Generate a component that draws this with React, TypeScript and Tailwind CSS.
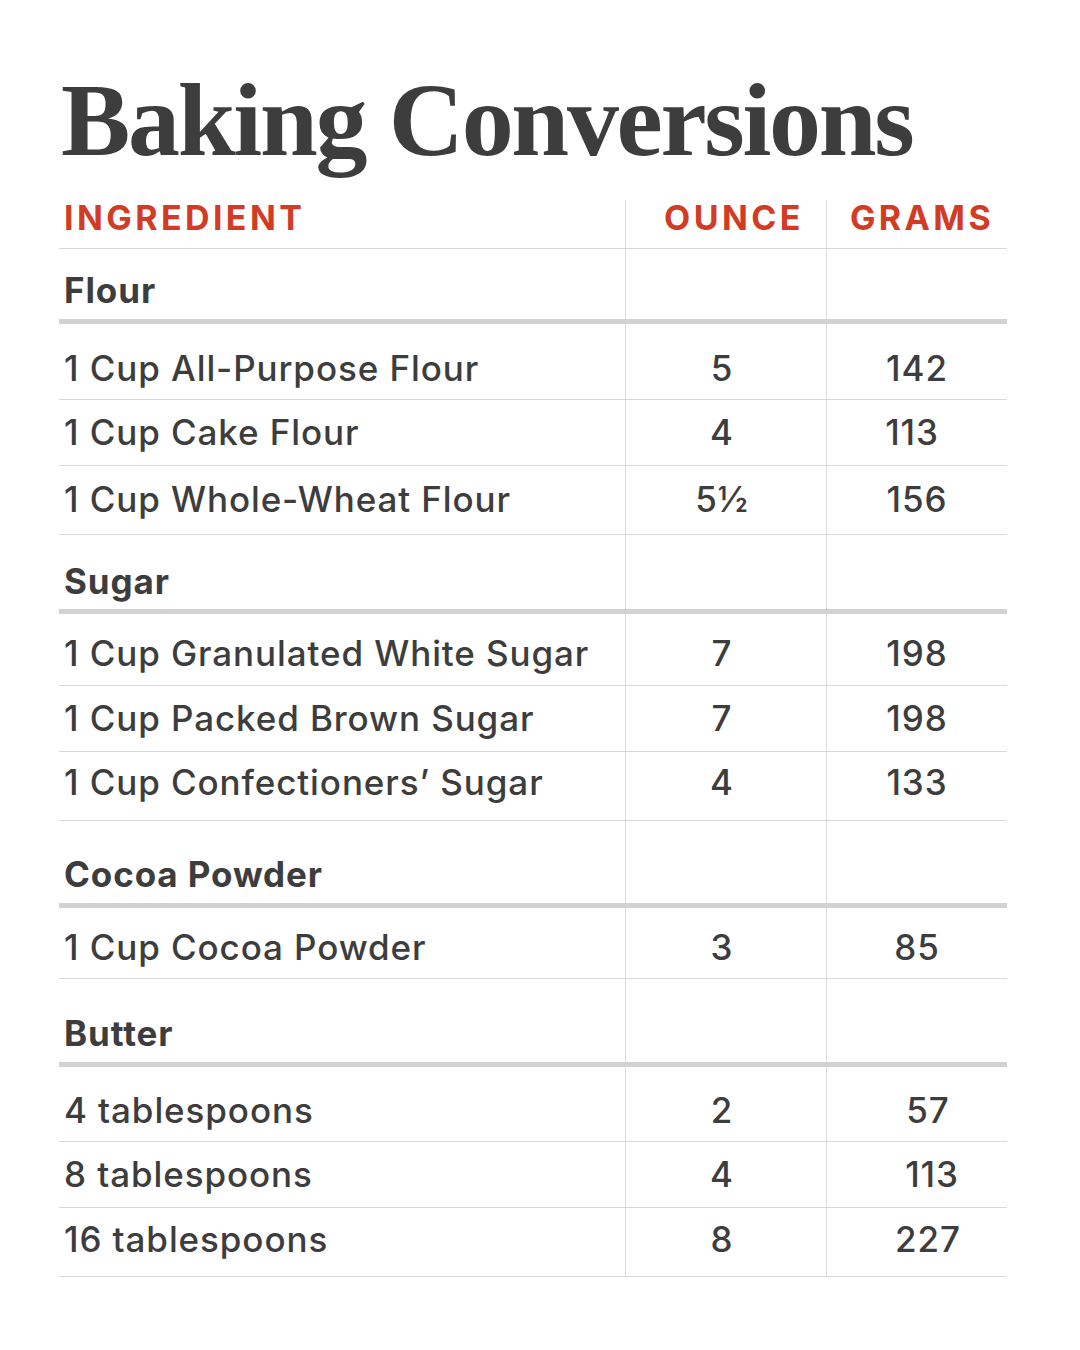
import React from "react";

type Row = {
  kind: "section" | "item";
  name: string;
  oz?: string;
  g?: string;
  h: string; // row height incl. border
  pad: string; // vertical nudge for text
  gPad?: string;
};

const rows: Row[] = [
  { kind: "section", name: "Flour", h: "h-[75px]", pad: "pt-[13px]" },
  { kind: "item", name: "1 Cup All-Purpose Flour", oz: "5", g: "142", h: "h-[76px]", pad: "pt-[13px]" },
  { kind: "item", name: "1 Cup Cake Flour", oz: "4", g: "113", h: "h-[66px]", pad: "pt-0", gPad: "pr-[10px]" },
  { kind: "item", name: "1 Cup Whole-Wheat Flour", oz: "5½", g: "156", h: "h-[69px]", pad: "pb-[2px]" },
  { kind: "section", name: "Sugar", h: "h-[79px]", pad: "pt-[18px]" },
  { kind: "item", name: "1 Cup Granulated White Sugar", oz: "7", g: "198", h: "h-[72px]", pad: "pt-[7px]" },
  { kind: "item", name: "1 Cup Packed Brown Sugar", oz: "7", g: "198", h: "h-[66px]", pad: "pt-0" },
  { kind: "item", name: "1 Cup Confectioners’ Sugar", oz: "4", g: "133", h: "h-[69px]", pad: "pb-[8px]" },
  { kind: "section", name: "Cocoa Powder", h: "h-[87px]", pad: "pt-[24px]" },
  { kind: "item", name: "1 Cup Cocoa Powder", oz: "3", g: "85", h: "h-[71px]", pad: "pt-[8px]" },
  { kind: "section", name: "Butter", h: "h-[88px]", pad: "pt-[26px]" },
  { kind: "item", name: "4 tablespoons", oz: "2", g: "57", h: "h-[75px]", pad: "pt-[12px]", gPad: "pl-[22px]" },
  { kind: "item", name: "8 tablespoons", oz: "4", g: "113", h: "h-[66px]", pad: "pt-0", gPad: "pl-[30px]" },
  { kind: "item", name: "16 tablespoons", oz: "8", g: "227", h: "h-[69px]", pad: "pb-[6px]", gPad: "pl-[22px]" },
];

const sans = "font-['Inter','Liberation_Sans',sans-serif]";

function TableRow({ row }: { row: Row }) {
  const isSection = row.kind === "section";
  const border = isSection ? "border-b-[5px] border-[#d2d2d2]" : "border-b border-[#d8d8d8]";
  return (
    <div className={`grid grid-cols-[566px_201px_181px] ${row.h} ${border}`}>
      <div className={`flex items-center pl-[5px] ${row.pad}`}>
        <span className={isSection ? "font-bold" : "font-medium"}>{row.name}</span>
      </div>
      <div className={`flex items-center justify-center border-l border-[#dcdcdc] pr-[8px] ${row.pad}`}>
        {row.oz}
      </div>
      <div className={`flex items-center justify-center border-l border-[#dcdcdc] ${row.gPad ?? ""} ${row.pad}`}>
        {row.g}
      </div>
    </div>
  );
}

export default function App() {
  return (
    <div className="w-[1080px] h-[1350px] bg-white text-[#3d3d3d]">
      <div className="pl-[59px] pt-[68px]">
        <h1 className="font-['Liberation_Serif',serif] font-bold text-[104px] leading-none tracking-[-2.3px] pl-[2px]">
          Baking Conversions
        </h1>
        <div className={`mt-[28px] w-[948px] ${sans} text-[35px] leading-none tracking-[0.9px] font-medium`}>
          <div className="grid grid-cols-[566px_201px_181px] h-[49px] border-b border-[#d8d8d8] text-[#d23c24] text-[34px] font-bold tracking-[0.1em]">
            <div className="flex items-center pl-[5px] pb-[13px]">INGREDIENT</div>
            <div className="flex items-center justify-center border-l border-[#dcdcdc] pl-[16px] pb-[13px]">OUNCE</div>
            <div className="flex items-center justify-center border-l border-[#dcdcdc] pl-[10px] pb-[13px]">GRAMS</div>
          </div>
          {rows.map((r, i) => (
            <TableRow key={i} row={r} />
          ))}
        </div>
      </div>
    </div>
  );
}
